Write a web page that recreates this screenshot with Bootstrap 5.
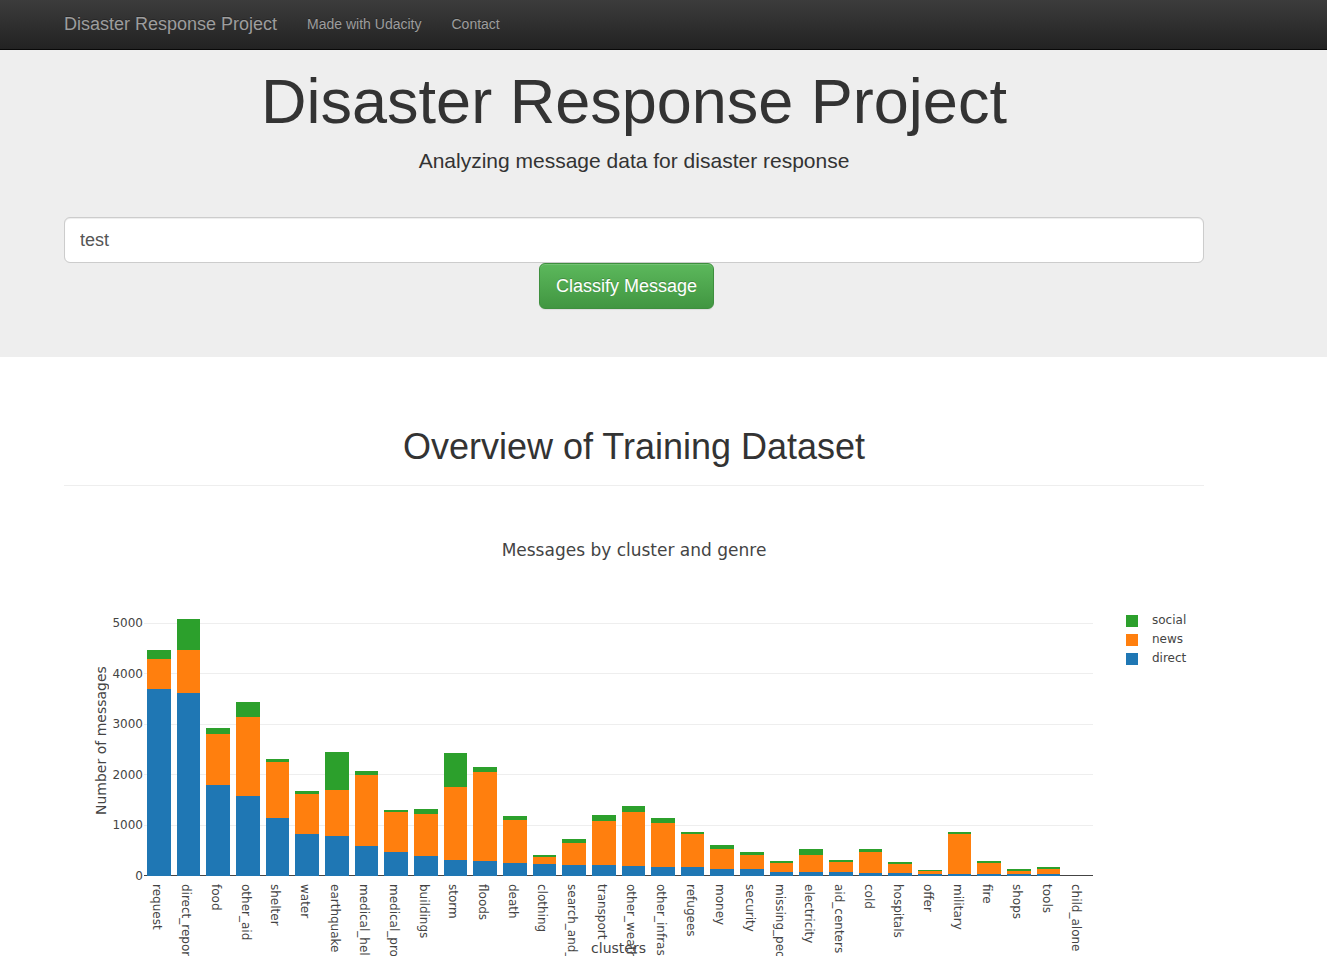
<!DOCTYPE html>
<html lang="en">
<head>
<meta charset="utf-8">
<meta name="viewport" content="width=device-width, initial-scale=1">
<title>Disasters</title>
<link href="https://cdn.jsdelivr.net/npm/bootstrap@5.3.0/dist/css/bootstrap.min.css" rel="stylesheet">
<style>
  body { font-family: "Liberation Sans", Arial, sans-serif; font-size: 14px; line-height: 20px; color: #333; background: #fff; }
  .page-gutter { padding-right: 59px; }
  .page-gutter > .container { max-width: 1170px; padding-left: 15px; padding-right: 15px; }

  .topbar { min-height: 50px; background: linear-gradient(#3c3c3c, #222); border-bottom: 1px solid #080808; }
  .topbar a { color: #9d9d9d; text-decoration: none; text-shadow: 0 -1px 0 rgba(0, 0, 0, .25); padding: 14px 15px; line-height: 20px; }
  .topbar a:hover { color: #fff; }
  .topbar .navbar-brand { font-size: 18px; margin: 0 0 0 -15px; }

  .hero { background: #eee; padding-bottom: 48px; }
  .hero h1 { font-size: 63px; line-height: 69px; font-weight: 400; padding-top: 17px; margin-bottom: 14px; }
  .hero p { font-size: 21px; line-height: 22px; margin-bottom: 45px; }
  .hero .form-control { height: 46px; padding: 10px 15px; font-size: 18px; color: #555; border: 1px solid #ccc; border-radius: 6px; box-shadow: inset 0 1px 1px rgba(0, 0, 0, .075); }
  .btn-classify { height: 46px; padding: 0 16px; font-size: 18px; color: #fff; border: 1px solid #3e8f3e; border-radius: 6px;
    background: linear-gradient(#5cb85c, #419641); text-shadow: 0 -1px 0 rgba(0, 0, 0, .2);
    box-shadow: inset 0 1px 0 rgba(255, 255, 255, .15), 0 1px 1px rgba(0, 0, 0, .075); }
  .btn-classify:hover { color: #fff; background: #419641; }

  .section-title { font-size: 36px; line-height: 40px; font-weight: 400; margin: 70px 0 20px; padding-bottom: 18px; border-bottom: 1px solid #eee; }

  .chart { display: grid; grid-template-columns: 80px 1fr 111px; grid-template-rows: 100px 270px 80px;
    font-family: "DejaVu Sans", Verdana, sans-serif; font-size: 12px; line-height: 16px; color: #444; }
  .chart-title { grid-area: 1 / 1 / 2 / 4; font-size: 17px; line-height: 20px; padding-top: 34px; }
  .y-side { grid-area: 2 / 1; }
  .y-title { writing-mode: vertical-rl; transform: rotate(180deg); font-size: 14px; line-height: 20px; margin-left: 27px; text-align: center; }
  .y-ticks { margin: 9px 0 -8px; padding-right: 1px; }
  .gridlines { grid-area: 2 / 2; padding-top: 17px; }
  .gridlines div { flex: 1; border-bottom: 1px solid #eee; }
  .gridlines div:first-child { flex: 0 0 1px; }
  .gridlines div:last-child { border-color: #444; }
  .bars { grid-area: 2 / 2; padding: 0 3px; gap: 6px; }
  .bars > div { flex: 1 1 0; min-width: 0; }
  .direct { background: #1f77b4; }
  .news { background: #ff7f0e; }
  .social { background: #2ca02c; }
  .x-ticks { grid-area: 3 / 2; overflow: hidden; }
  .x-ticks > div { flex: 1 1 0; min-width: 0; padding: 8px 4px 0 0; display: flex; justify-content: center; }
  .x-ticks span { writing-mode: vertical-rl; white-space: nowrap; }
  .x-title { grid-area: 3 / 2; align-self: end; font-size: 14px; line-height: 16px; }
  .legend-list { grid-area: 2 / 3; padding: 5px 0 0 33px; line-height: 19px; }
  .swatch { width: 12px; height: 12px; margin-right: 14px; }
</style>
</head>
<body>
<nav class="topbar page-gutter" aria-label="Main">
  <div class="container d-flex align-items-center">
    <a class="navbar-brand" href="#">Disaster Response Project</a>
    <a href="#udacity">Made with Udacity</a>
    <a href="#contact">Contact</a>
  </div>
</nav>

<header class="hero page-gutter">
  <div class="container">
    <h1 class="text-center">Disaster Response Project</h1>
    <p class="text-center">Analyzing message data for disaster response</p>
    <form action="#" method="get">
      <input type="text" class="form-control" name="query" value="test" aria-label="Enter a message to classify">
      <button type="submit" class="btn btn-classify offset-5 d-block">Classify Message</button>
    </form>
  </div>
</header>

<main class="page-gutter">
  <div class="container">
    <h2 class="section-title text-center">Overview of Training Dataset</h2>
    <section class="chart" aria-label="Messages by cluster and genre">
      <div class="chart-title text-center">Messages by cluster and genre</div>
      <div class="y-side d-flex justify-content-between">
        <div class="y-title">Number of messages</div>
        <div class="y-ticks d-flex flex-column justify-content-between text-end">
          <span>5000</span><span>4000</span><span>3000</span><span>2000</span><span>1000</span><span>0</span>
        </div>
      </div>
      <div class="gridlines d-flex flex-column"><div></div><div></div><div></div><div></div><div></div><div></div></div>
      <div class="bars d-flex" id="bars"></div>
      <div class="x-ticks d-flex" id="xTicks"></div>
      <div class="x-title text-center">clusters</div>
      <div class="legend-list">
        <div class="d-flex align-items-center"><span class="swatch social"></span>social</div>
        <div class="d-flex align-items-center"><span class="swatch news"></span>news</div>
        <div class="d-flex align-items-center"><span class="swatch direct"></span>direct</div>
      </div>
    </section>
  </div>
</main>

<script src="https://cdn.jsdelivr.net/npm/bootstrap@5.3.0/dist/js/bootstrap.bundle.min.js"></script>
<script>
  // cluster, then bar heights for direct, news and social
  const clusters = [
    ['request', 187, 30, 9], ['direct_report', 183, 43, 31], ['food', 91, 51, 6], ['other_aid', 80, 79, 15],
    ['shelter', 58, 56, 3], ['water', 42, 40, 3], ['earthquake', 40, 46, 38], ['medical_help', 30, 71, 4],
    ['medical_products', 24, 40, 2], ['buildings', 20, 42, 5], ['storm', 16, 73, 34], ['floods', 15, 89, 5],
    ['death', 13, 43, 4], ['clothing', 12, 7, 2], ['search_and_rescue', 11, 22, 4], ['transport', 11, 44, 6],
    ['other_weather', 10, 54, 6], ['other_infrastructure', 9, 44, 5], ['refugees', 9, 33, 2], ['money', 7, 20, 4],
    ['security', 7, 14, 3], ['missing_people', 4, 9, 2], ['electricity', 4, 17, 6], ['aid_centers', 4, 10, 2],
    ['cold', 3, 21, 3], ['hospitals', 3, 9, 2], ['offer', 2, 3, 1], ['military', 2, 40, 2],
    ['fire', 2, 11, 2], ['shops', 2, 3, 2], ['tools', 2, 5, 2], ['child_alone', 0, 0, 0]
  ];
  const segment = (genre, height) => `<div class="${genre}" style="height:${height}px"></div>`;
  document.getElementById('bars').innerHTML = clusters.map(([, direct, news, social]) =>
    `<div class="d-flex flex-column justify-content-end">${segment('social', social)}${segment('news', news)}${segment('direct', direct)}</div>`).join('');
  document.getElementById('xTicks').innerHTML = clusters.map(([name]) => `<div><span>${name}</span></div>`).join('');
</script>
</body>
</html>
